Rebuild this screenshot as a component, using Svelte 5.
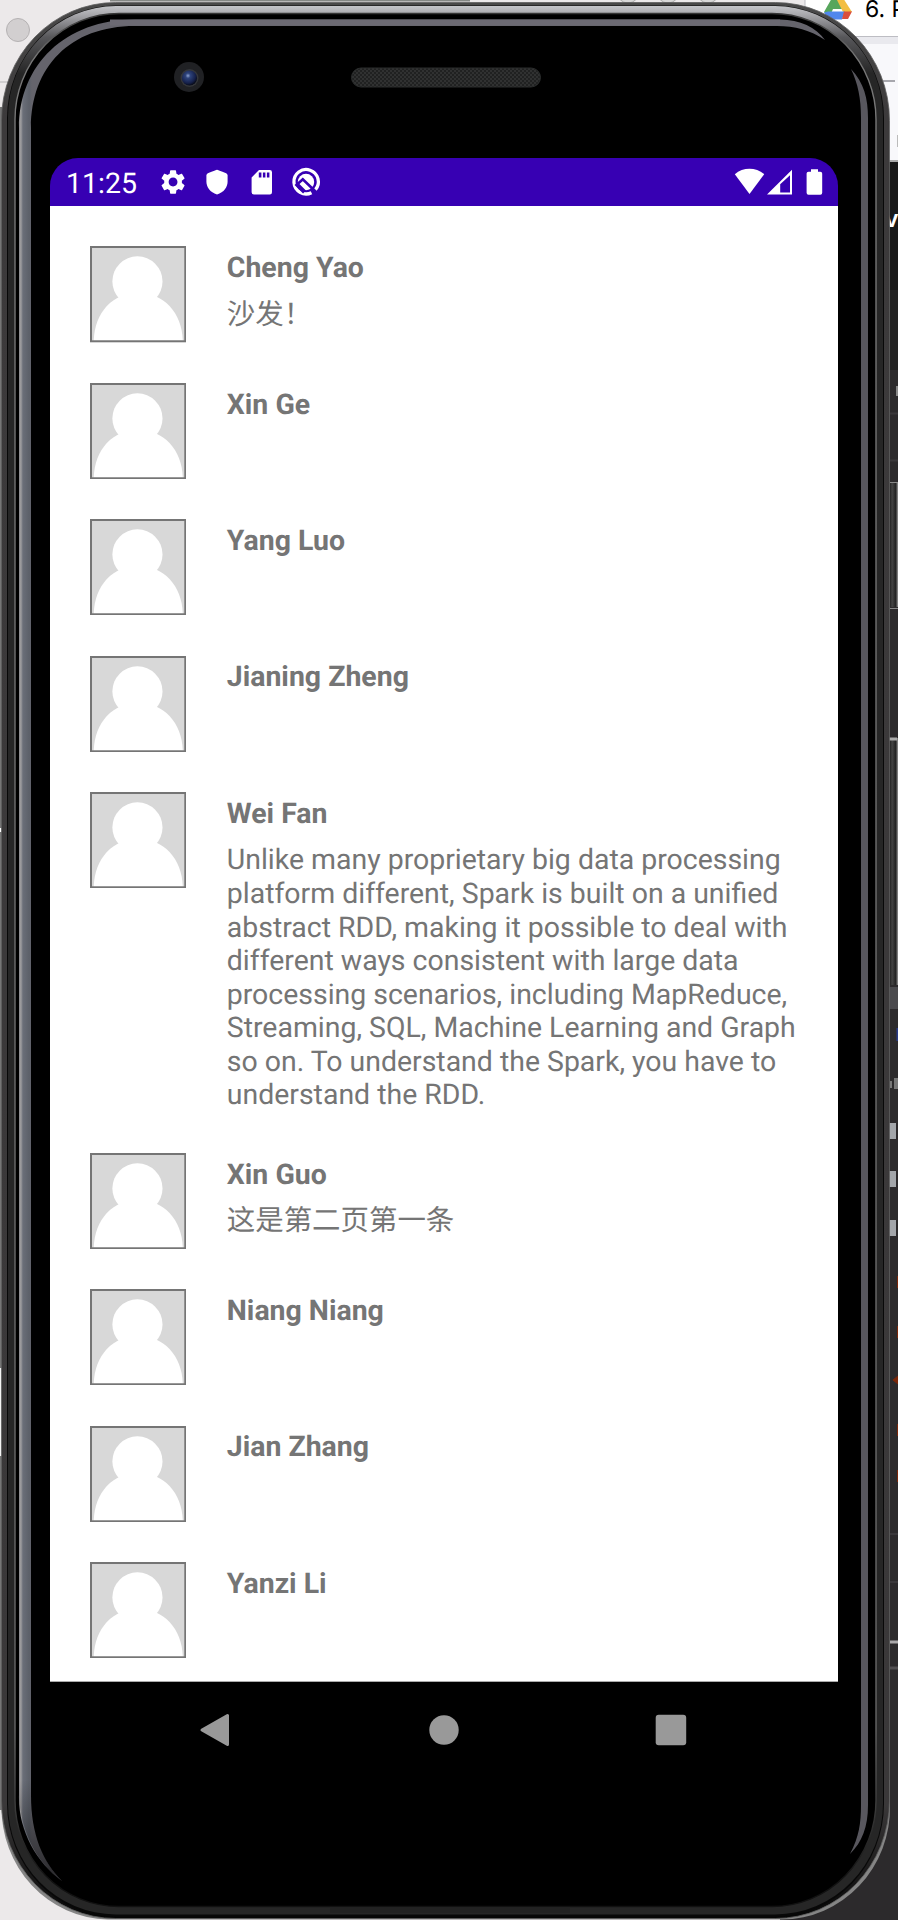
<script>
  const comments = [
    { name: 'Cheng Yao', text: '沙发！' },
    { name: 'Xin Ge' },
    { name: 'Yang Luo' },
    { name: 'Jianing Zheng' },
    {
      name: 'Wei Fan',
      text: 'Unlike many proprietary big data processing platform different, Spark is built on a unified abstract RDD, making it possible to deal with different ways consistent with large data processing scenarios, including MapReduce, Streaming, SQL, Machine Learning and Graph so on. To understand the Spark, you have to understand the RDD.'
    },
    { name: 'Xin Guo', text: '这是第二页第一条' },
    { name: 'Niang Niang' },
    { name: 'Jian Zhang' },
    { name: 'Yanzi Li' }
  ];
</script>

<div class="desktop">
  <svg class="scene" viewBox="0 0 898 1920" aria-hidden="true">
    <defs>
      <linearGradient id="rim" x1="0" y1="0" x2="0" y2="1920" gradientUnits="userSpaceOnUse">
        <stop offset="0" stop-color="#4a4a4a" /><stop offset=".06" stop-color="#3c3a3b" />
        <stop offset=".94" stop-color="#3a3839" /><stop offset="1" stop-color="#050505" />
      </linearGradient>
      <linearGradient id="chrome" x1="0" y1="6" x2="0" y2="110" gradientUnits="userSpaceOnUse">
        <stop offset="0" stop-color="#c4c5c9" /><stop offset=".08" stop-color="#a9a9ad" />
        <stop offset=".3" stop-color="#57575a" /><stop offset=".65" stop-color="#262626" />
      </linearGradient>
      <linearGradient id="hair" x1="0" y1="0" x2="0" y2="1920" gradientUnits="userSpaceOnUse">
        <stop offset="0" stop-color="#222" /><stop offset=".03" stop-color="#777" />
        <stop offset=".9" stop-color="#666" /><stop offset=".98" stop-color="#111" />
      </linearGradient>
      <linearGradient id="glass" x1="18" y1="0" x2="32" y2="0" gradientUnits="userSpaceOnUse">
        <stop offset="0" stop-color="#77777b" /><stop offset=".2" stop-color="#a09fa1" />
        <stop offset=".35" stop-color="#6a6e78" /><stop offset=".8" stop-color="#5c6069" />
        <stop offset="1" stop-color="#65646c" />
      </linearGradient>
      <linearGradient id="tail" x1="0" y1="1780" x2="0" y2="1882" gradientUnits="userSpaceOnUse">
        <stop offset="0" stop-color="#000" stop-opacity="0" /><stop offset="1" stop-color="#000" stop-opacity=".6" />
      </linearGradient>
      <linearGradient id="key" x1="889" y1="0" x2="898" y2="0" gradientUnits="userSpaceOnUse">
        <stop offset="0" stop-color="#151515" /><stop offset=".35" stop-color="#444" /><stop offset=".75" stop-color="#222" /><stop offset="1" stop-color="#999" />
      </linearGradient>
      <pattern id="mesh" width="4" height="4" patternUnits="userSpaceOnUse">
        <rect width="4" height="4" fill="#202121" /><path d="M0 0h2v2H0zM2 2h2v2H2z" fill="#303131" />
      </pattern>
      <radialGradient id="lens" cx=".4" cy=".35" r=".65">
        <stop offset="0" stop-color="#8ea3d0" /><stop offset=".25" stop-color="#2e437a" /><stop offset=".75" stop-color="#15204a" /><stop offset="1" stop-color="#080b18" />
      </radialGradient>
    </defs>

    <!-- windows behind the device -->
    <rect width="898" height="1920" fill="#ece9ea" />
    <path d="M0 82h12" stroke="#c9c6c7" stroke-width="1.5" />
    <rect y="107" width="6" height="1703" fill="#767676" />
    <rect y="828" width="2" height="4" fill="#fff" />
    <rect y="1368" width="2" height="88" fill="#f4f4f4" />
    <circle cx="18" cy="30" r="11.5" fill="#d2cfd0" stroke="#b5b2b3" />
    <path d="M110 .6h360" stroke="#858885" stroke-width="2" />
    <g fill="#d8d8d8" stroke="#aaa"><circle cx="628" cy="-8" r="11" /><circle cx="668" cy="-8" r="11" /><circle cx="708" cy="-8" r="11" /></g>
    <rect x="780" y="34" width="118" height="130" fill="#f8f8fb" />
    <rect x="800" y="35" width="98" height="9" fill="#e9e9ee" />
    <path d="M805 0h93v36h-93z" fill="#fff" /><path d="M805 36.5h93M805 0v36" stroke="#bdbdc3" />
    <path d="M880 81h15" stroke="#a7a7ad" stroke-width="2" />
    <rect x="897" y="135" width="1" height="12" fill="#bbb" />
    <path d="M832-2l6 0 6 11h-11l-4 9-5-6z" fill="#57a65c" />
    <path d="M836-2h7l9 14h-9z" fill="#f3be42" />
    <path d="M828 11.5h17l-3 8h-14l-4-7z" fill="#5087ec" /><path d="M844 11.5h8l-4 7.5h-6z" fill="#d94f3d" />
    <text x="865" y="17" font-size="23" fill="#000" font-family="Inter, sans-serif">6. P</text>
    <path d="M880 161h18" stroke="#aaa" stroke-width="2" />
    <path d="M884 162h14v1758H780v-130h104z" fill="#2c2a2c" />
    <rect x="884" y="162" width="14" height="161" fill="#191919" />
    <rect x="884" y="290" width="14" height="80" fill="#232323" />
    <text x="884.500" y="227" font-size="24" font-weight="600" fill="#fff" font-family="Inter, sans-serif">v</text>
    <path d="M890 413.500h8M890 460.500h8M890 1534h8M890 1582h8" stroke="#3a383b" stroke-width="2" />
    <rect x="896" y="386" width="2" height="10" fill="#888" />
    <rect x="888" y="483" width="12" height="124" fill="url(#key)" /><path d="M890 482.500h8M890 608.500h8" stroke="#888" />
    <rect x="888" y="738" width="11" height="247" fill="url(#key)" /><path d="M889 739h8" stroke="#aaa" stroke-width="3" />
    <rect x="889" y="987" width="9" height="22" fill="#4a4a4d" />
    <path d="M897.500 1028v13" stroke="#283a87" stroke-width="2" />
    <g fill="#a3a6aa"><rect x="890" y="1081" width="2" height="7" fill="#777" /><rect x="894" y="1078" width="4" height="11" fill="#777" /><rect x="889" y="1123" width="7" height="16" /><rect x="889" y="1171" width="7" height="16" /><rect x="889" y="1220" width="7" height="16" /></g>
    <path d="M893 1380l5-4v8zM897.500 1276v12M897.500 1326v12M897.500 1424v12M897.500 1470v12" fill="#7b2608" stroke="#7b2608" />
    <path d="M890 1642h8" stroke="#a9a7a9" stroke-width="3" /><path d="M890 1668h8" stroke="#514f51" stroke-width="3" />

    <!-- metal body, from the outer edge inwards -->
    <path d="M1.500 1780H890V1805A108 112 0 0 1 782 1919.500H108A108 112 0 0 1 1.500 1805Z" fill="#858585" />
    <rect x="1.500" y="2.500" width="888" height="1916" rx="114" ry="118" fill="url(#rim)" stroke="#606060" stroke-width=".8" />
    <rect x="7" y="5.500" width="877" height="1911" rx="109" ry="113" fill="#080808" />
    <rect x="8" y="6" width="875" height="1908.500" rx="108" ry="111" fill="url(#chrome)" />
    <path d="M330 1910.500h240" stroke="#222" stroke-width="5" />
    <rect x="15" y="13.500" width="861" height="1893" rx="104" ry="106" fill="#000" stroke="url(#hair)" stroke-width="1.400" />

    <!-- glass edge reflections -->
    <path d="M62 1881C36 1862 18 1830 19 1795V128C19 65 65 19.500 135 19.500H780C800 20 816 27 825 40C810 30 795 26 777 26H135C70 26 31 67 31 128V1795C31 1835 43 1862 62 1881Z" fill="url(#glass)" />
    <path d="M110 22.500H780" stroke="#6c6a73" stroke-width="6" />
    <path d="M62 1881C36 1862 18 1830 18 1780H32C31 1835 43 1862 62 1881Z" fill="url(#tail)" />
    <path d="M851 69C864 83 868 98 868 118V1805C868 1827 862 1842 850 1854C859 1837 861 1823 861 1805V118C861 98 858 84 851 69Z" fill="#58575e" />

    <circle cx="189" cy="77" r="15" fill="#202124" /><circle cx="189.500" cy="78" r="9" fill="#34363a" /><circle cx="189.500" cy="78" r="7.600" fill="url(#lens)" />
    <rect x="351.500" y="68" width="189" height="19" rx="9.500" fill="url(#mesh)" stroke="#2a2c2c" />
  </svg>

  <main class="screen">
    <header class="status">
      <span class="clock">11:25</span>
      <svg class="ico" viewBox="0 0 32 32"><g transform="translate(1.3 1.2) scale(1.23)"><path fill="#fff" d="M19.14 12.94c.04-.3.06-.61.06-.94 0-.32-.02-.64-.07-.94l2.03-1.58c.18-.14.23-.41.12-.61l-1.92-3.32c-.12-.22-.37-.29-.59-.22l-2.39.96c-.5-.38-1.03-.7-1.62-.94L14.4 2.81c-.04-.24-.24-.41-.48-.41h-3.84c-.24 0-.43.17-.47.41L9.25 5.35c-.59.24-1.13.57-1.62.94L5.24 5.33c-.22-.08-.47 0-.59.22L2.74 8.87c-.12.21-.08.47.12.61l2.03 1.58c-.05.3-.09.63-.09.94s.02.64.07.94l-2.03 1.58c-.18.14-.23.41-.12.61l1.92 3.32c.12.22.37.29.59.22l2.39-.96c.5.38 1.03.7 1.62.94l.36 2.54c.05.24.24.41.48.41h3.84c.24 0 .44-.17.47-.41l.36-2.54c.59-.24 1.13-.56 1.62-.94l2.39.96c.22.08.47 0 .59-.22l1.92-3.32c.12-.22.07-.47-.12-.61l-2.01-1.58zM12 15.6c-1.98 0-3.6-1.62-3.6-3.6s1.62-3.6 3.6-3.6 3.6 1.62 3.6 3.6-1.62 3.6-3.6 3.6z" /></g></svg>
      <svg class="ico" viewBox="0 0 32 32"><path fill="#fff" d="M16 3.800Q16.800 3.800 25.200 7.300Q26.600 8 26.600 9.500V15.500C26.600 21 23 26.400 16 28.400C9 26.400 5.400 21 5.400 15.500V9.500Q5.400 8 6.800 7.300Q15.200 3.800 16 3.800Z" /></svg>
      <svg class="ico" viewBox="0 0 32 32"><path fill="#fff" fill-rule="evenodd" d="M13 4H23.800Q26 4 26 6.300V26.300Q26 28.600 23.800 28.600H8Q5.600 28.600 5.600 26.300V11.500ZM12.800 6.400V11.400H15.400V6.400ZM16.900 6.400V11.400H19.400V6.400ZM20.900 6.400V11.400H23.400V6.400Z" /></svg>
      <svg class="ico" viewBox="0 0 32 32"><path d="M21.500 26.700A12.200 12.200 0 1 1 25.300 23.800" fill="none" stroke="#fff" stroke-width="3.300" /><circle cx="16" cy="16" r="8.200" fill="#fff" /><path d="M7 18.500L12.800 13.200L26 26" fill="none" stroke="#3700b3" stroke-width="2.600" /><path d="M6 17.500L14.500 26" stroke="#3700b3" stroke-width="4" /></svg>
      <svg class="signal" viewBox="0 0 92 32"><path fill="#fff" d="M.8 8.300C9 1 22 1 30.200 8.300L15.500 28Z" /><path fill="#fff" fill-rule="evenodd" d="M33 28.500L58 3.700V28.500ZM46.200 18.200V26.500H56V9.200Z" /><path fill="#fff" d="M77 3.200h7v2.500h2.300q1.900 0 1.900 1.900v19.200q0 1.900-1.900 1.900H74.500q-1.900 0-1.900-1.900V7.600q0-1.900 1.900-1.900H77z" /></svg>
    </header>

    <ul class="comments">
      {#each comments as comment}
        <li>
          <svg class="avatar" viewBox="0 0 96 96"><rect x="1" y="1" width="94" height="94" fill="#d8d8d8" /><circle cx="47.300" cy="35.300" r="25" fill="#fff" /><path d="M3.700 94.500C4.500 66 23 46.500 48 46.500S91.700 66 92.500 94.500Z" fill="#fff" /><rect x="1" y="1" width="94" height="94" fill="none" stroke="#757575" stroke-width="2" /></svg>
          <div class="copy">
            <h2>{comment.name}</h2>
            {#if comment.text}<p>{comment.text}</p>{/if}
          </div>
        </li>
      {/each}
    </ul>

    <nav>
      <svg viewBox="0 0 36 36"><path d="M4 18L29.500 3.500V32.500Z" fill="#999" stroke="#999" stroke-width="3" stroke-linejoin="round" /></svg>
      <svg viewBox="0 0 36 36"><circle cx="18" cy="18" r="14.700" fill="#999" /></svg>
      <svg viewBox="0 0 36 36"><rect x="2.700" y="2.800" width="30.500" height="30.500" rx="3" fill="#999" /></svg>
    </nav>
  </main>
</div>

<style>
  .desktop {
    position: relative;
    box-sizing: border-box;
    width: 898px;
    height: 1920px;
    padding: 158px 60px 0 50px;
    overflow: hidden;
    font-family: Roboto, 'Noto Sans CJK SC', sans-serif;
    text-rendering: geometricPrecision;
  }
  .scene {
    position: absolute;
    inset: 0;
    width: 898px;
    height: 1920px;
  }
  .screen {
    position: relative;
    width: 788px;
    border-radius: 28px 28px 0 0;
    overflow: hidden;
  }
  .status {
    display: flex;
    align-items: center;
    height: 48px;
    padding-left: 16px;
    background: #3700b3;
    color: #fff;
  }
  .clock {
    width: 90.5px;
    font-size: 28.5px;
    line-height: 50px;
    padding-top: 3px;
  }
  .ico {
    width: 32px;
    height: 32px;
    margin-right: 12.6px;
  }
  .signal {
    width: 92px;
    height: 32px;
    margin: 0 12px 0 auto;
  }
  .comments {
    display: flex;
    flex-direction: column;
    box-sizing: border-box;
    height: 1476px;
    margin: 0;
    padding: 40.3px 0 0 40px;
    list-style: none;
    background: #fff;
    border-bottom: 1px solid #aaa;
    color: #757575;
    overflow: hidden;
  }
  li {
    display: flex;
    flex: none;
    gap: 40.5px;
    min-height: 96.3px;
    margin-bottom: 40.12px;
  }
  .avatar {
    flex: none;
    width: 96.3px;
    height: 96.3px;
  }
  .copy {
    width: 580px;
    padding-top: 4.8px;
  }
  h2,
  p {
    margin: 0;
    font-size: 28.45px;
    line-height: 33.6px;
  }
  h2 {
    font-weight: 700;
  }
  p {
    margin-top: 13px;
    padding-bottom: 0.6px;
  }
  nav {
    display: flex;
    justify-content: space-between;
    padding: 30px 149px 0 148px;
  }
  nav svg {
    width: 36px;
    height: 36px;
  }
</style>
